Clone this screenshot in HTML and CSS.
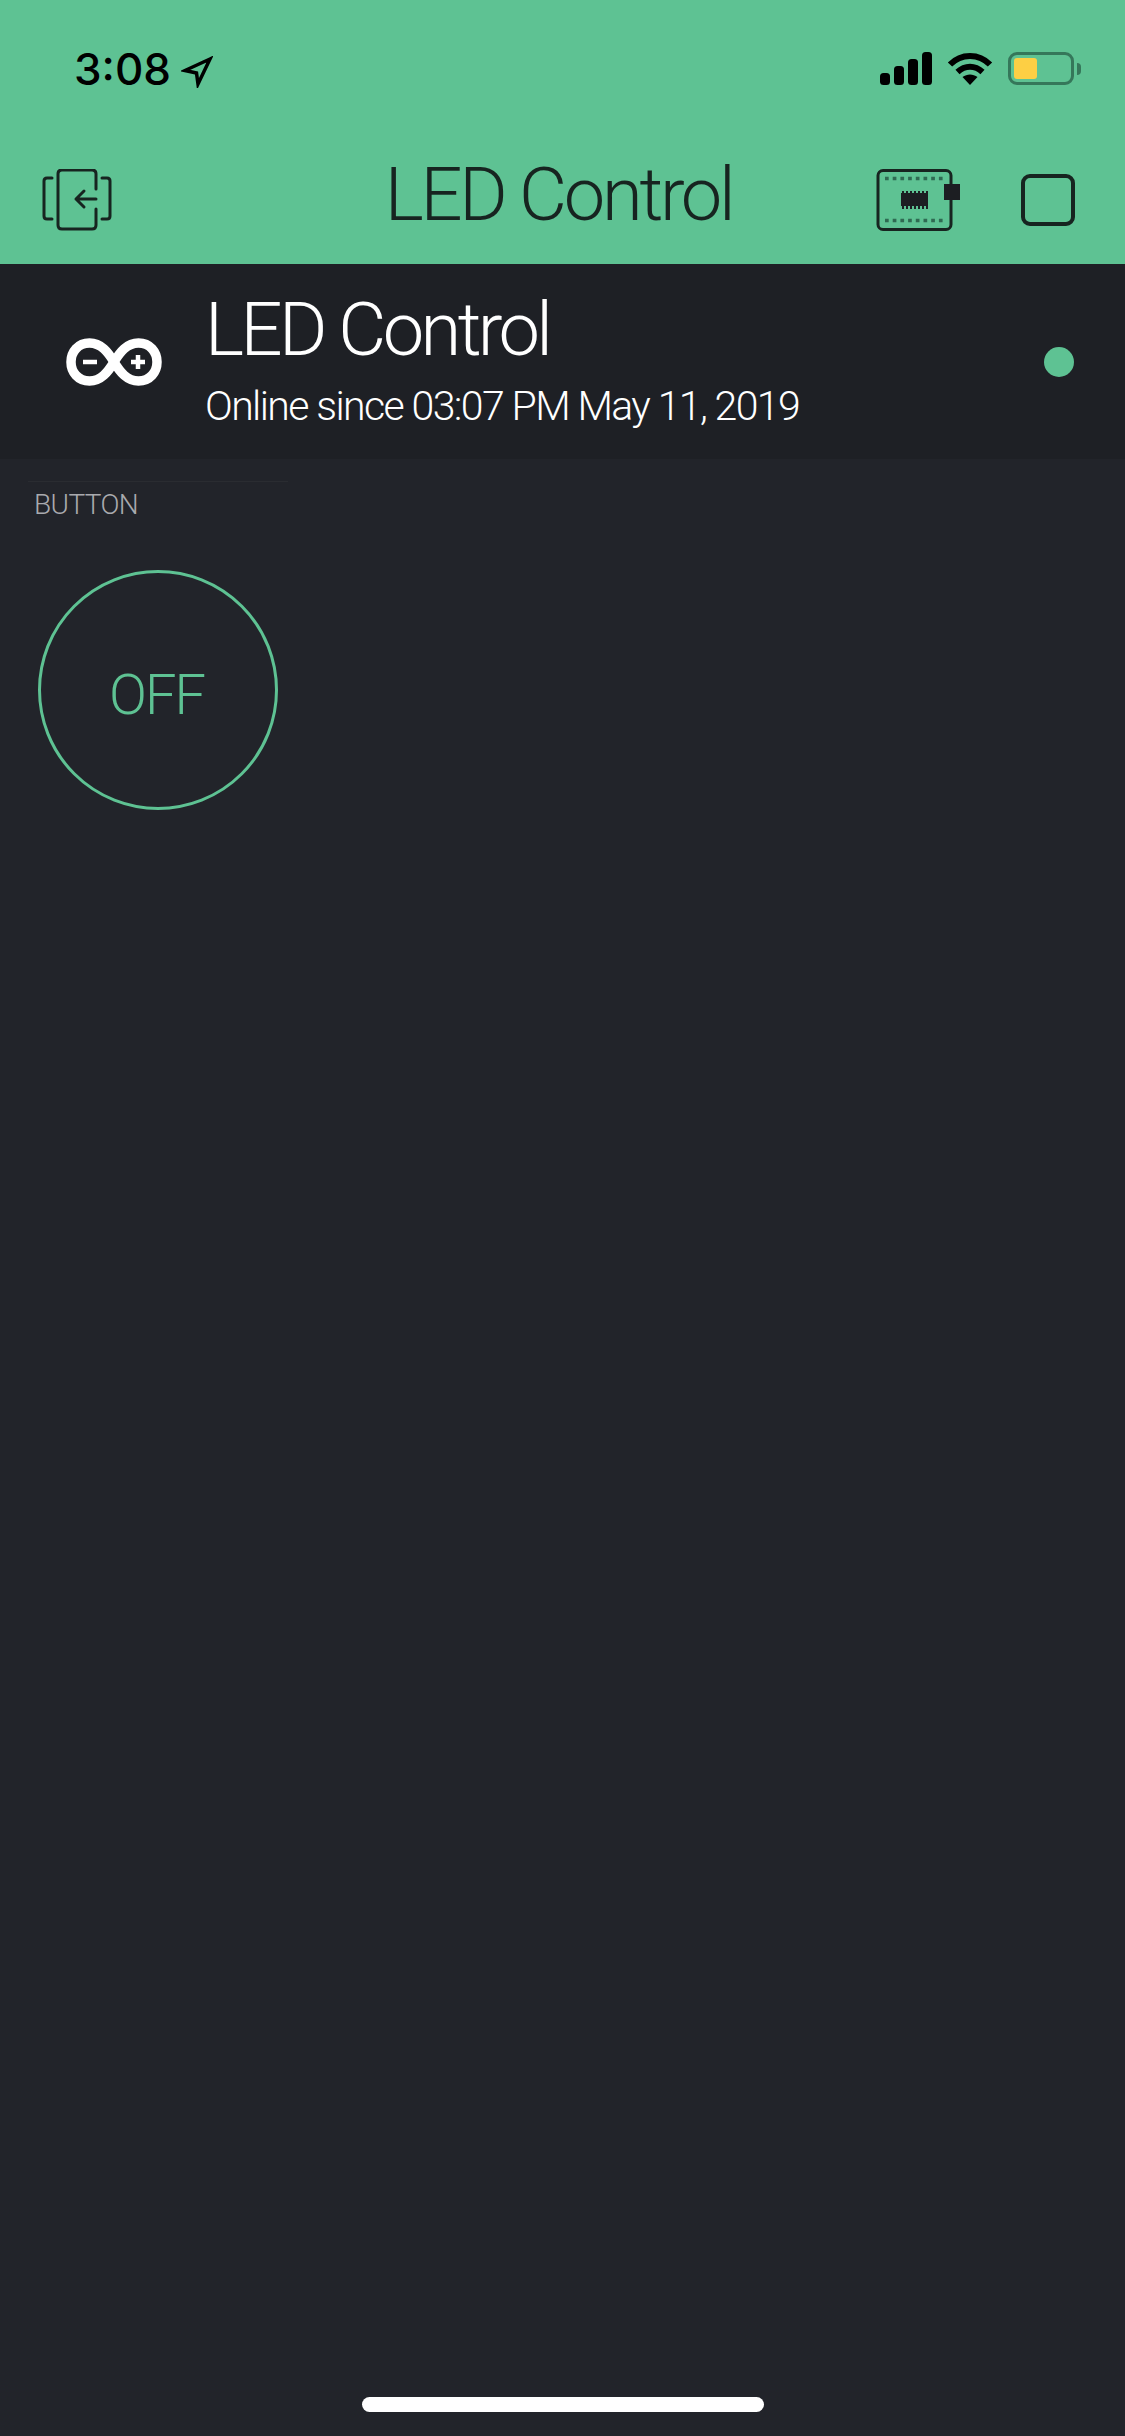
FILE: index.html
```html
<!DOCTYPE html>
<html lang="en">
<head>
    <meta charset="UTF-8">
    <title>LED Control</title>
    <link rel="stylesheet" href="styles.css">
</head>
<body>
    <header class="top">
        <div class="status">
            <div class="status-left">
                <span class="time">3:08</span>
                <svg class="loc" width="32" height="32" viewBox="0 0 32 32">
                    <path d="M29 3 4 14.500 15.500 17 17 28Z" fill="none" stroke="#000" stroke-width="3.500" stroke-miterlimit="10"/>
                </svg>
            </div>
            <div class="status-right">
                <svg width="52" height="33" viewBox="0 0 52 33" fill="#000">
                    <rect x="0" y="21" width="10" height="12" rx="3.500"/>
                    <rect x="14" y="14" width="10" height="19" rx="3.500"/>
                    <rect x="28" y="7" width="10" height="26" rx="3.500"/>
                    <rect x="42" y="0" width="10" height="33" rx="3.500"/>
                </svg>
                <svg width="46" height="33" viewBox="0 0 46 33" fill="none" stroke="#000" stroke-width="6">
                    <path d="M3 12.500C14 1 32 1 43 12.500"/>
                    <path d="M10.500 20C18 13 28 13 35.500 20"/>
                    <path d="M23 33 15.500 25C20 21.500 26 21.500 30.500 25Z" fill="#000" stroke="none"/>
                </svg>
                <div class="battery">
                    <div class="battery-body"><div class="battery-level"></div></div>
                    <div class="battery-nub"></div>
                </div>
            </div>
        </div>
        <nav class="nav">
            <div class="nav-side">
                <svg width="70" height="62" viewBox="0 0 70 62" fill="none" stroke="#172420" stroke-width="3" stroke-linecap="round" stroke-linejoin="round">
                    <path d="M10 9H5Q2 9 2 12V47Q2 50 5 50H10"/>
                    <path d="M60 9H65Q68 9 68 12V47Q68 50 65 50H60"/>
                    <path d="M54 20V5Q54 1 50 1H20Q16 1 16 5V56Q16 60 20 60H50Q54 60 54 56V40"/>
                    <path d="M54 30H34M42 22 34 30 42 38"/>
                </svg>
            </div>
            <h1 class="title">LED Control</h1>
            <div class="nav-side nav-right">
                <svg width="85" height="62" viewBox="0 0 85 62">
                    <rect x="2" y="1.500" width="73" height="59" rx="5" fill="none" stroke="#172420" stroke-width="3"/>
                    <path d="M9 9.500H68M9 51.500H68" stroke="#2f6a52" stroke-width="3.500" stroke-dasharray="3.700 4" fill="none"/>
                    <path d="M27 22V40M31 22V40M35 22V40M39 22V40M43 22V40M47 22V40M51 22V40" stroke="#1c1e22" stroke-width="2"/>
                    <rect x="25" y="24" width="26" height="13" fill="#1c1e22"/>
                    <rect x="68" y="15" width="16" height="16" fill="#1c1e22"/>
                </svg>
                <div class="stop"></div>
            </div>
        </nav>
    </header>

    <section class="device">
        <svg class="logo" width="96" height="48" viewBox="0 0 96 48">
            <path d="M48 24C42 14 35 5 23.500 5 12 5 5 14 5 24S12 43 23.500 43C35 43 42 34 48 24S61 5 72.500 5C84 5 91 14 91 24S84 43 72.500 43C61 43 54 34 48 24Z" fill="none" stroke="#fff" stroke-width="9.500"/>
            <path d="M17 24H31M65 24H79M72 17V31" stroke="#fff" stroke-width="4.500" fill="none"/>
        </svg>
        <div class="device-text">
            <div class="device-name">LED Control</div>
            <div class="device-status">Online since 03:07 PM May 11, 2019</div>
        </div>
        <div class="dot"></div>
    </section>

    <main class="board">
        <div class="widget">
            <div class="widget-label">BUTTON</div>
            <div class="round-btn">OFF</div>
        </div>
    </main>

    <div class="home-wrap"><div class="home-bar"></div></div>
</body>
</html>
```

FILE: styles.css
```css
* { box-sizing: border-box; }
html, body { margin: 0; height: 100%; }
body { width: 1125px; height: 2436px; display: flex; flex-direction: column; background: #22242a; font-family: Roboto, sans-serif; overflow: hidden; }

.top { height: 264px; background: #5ec293; flex: none; }
.status { height: 116px; padding: 52px 44px 0 74px; display: flex; justify-content: space-between; align-items: flex-start; }
.status-left { display: flex; align-items: flex-start; gap: 10px; }
.time { font-family: Inter, sans-serif; font-size: 44px; font-weight: 500; line-height: 34px; color: #000; }
.loc { margin-top: 4px; }
.status-right { display: flex; align-items: flex-start; gap: 15px; }
.battery { display: flex; align-items: center; gap: 3px; }
.battery-body { width: 66px; height: 33px; border: 3px solid #35775a; border-radius: 9px; padding: 3px; }
.battery-level { width: 23px; height: 21px; background: #fdcf44; border-radius: 3px; }
.battery-nub { width: 4px; height: 12px; background: #35775a; border-radius: 0 6px 6px 0; }

.nav { height: 148px; padding: 20px 50px 0 42px; display: grid; grid-template-columns: 1fr auto 1fr; align-items: center; }
.nav-side { display: flex; align-items: center; }
.nav-right { justify-content: flex-end; gap: 60px; }
.title { margin: 0 0 10px; font-size: 74px; font-weight: 300; line-height: 80px; letter-spacing: -3.300px; color: #172420; }
.stop { width: 54px; height: 52px; border: 4px solid #172420; border-radius: 9px; }

.device { height: 195px; background: #1e2025; flex: none; display: flex; align-items: center; padding: 0 51px 0 66px; }
.logo { flex: none; margin-right: 43px; }
.device-text { flex: 1; }
.device-name { font-size: 74px; font-weight: 300; line-height: 76px; letter-spacing: -3.600px; color: #fff; }
.device-status { margin-top: 13px; font-size: 41px; font-weight: 300; line-height: 50px; letter-spacing: -1.600px; color: #fff; }
.dot { width: 30px; height: 30px; border-radius: 50%; background: #5ec293; }

.board { flex: 1; padding: 22px 28px 0; }
.widget { width: 260px; border-top: 1px solid #2a2c31; padding: 7px 0 0 6px; }
.widget-label { font-size: 28px; font-weight: 300; line-height: 32px; letter-spacing: -0.600px; color: #a9aaae; }
.round-btn { width: 240px; height: 240px; margin: 49px 0 0 4px; padding: 10px 3px 0 0; border: 3px solid #5ec293; border-radius: 50%; display: flex; align-items: center; justify-content: center; font-size: 56px; font-weight: 300; letter-spacing: -2px; color: #5ec293; }

.home-wrap { flex: none; height: 39px; display: flex; justify-content: center; }
.home-bar { width: 402px; height: 15px; border-radius: 8px; background: #fff; }
```
